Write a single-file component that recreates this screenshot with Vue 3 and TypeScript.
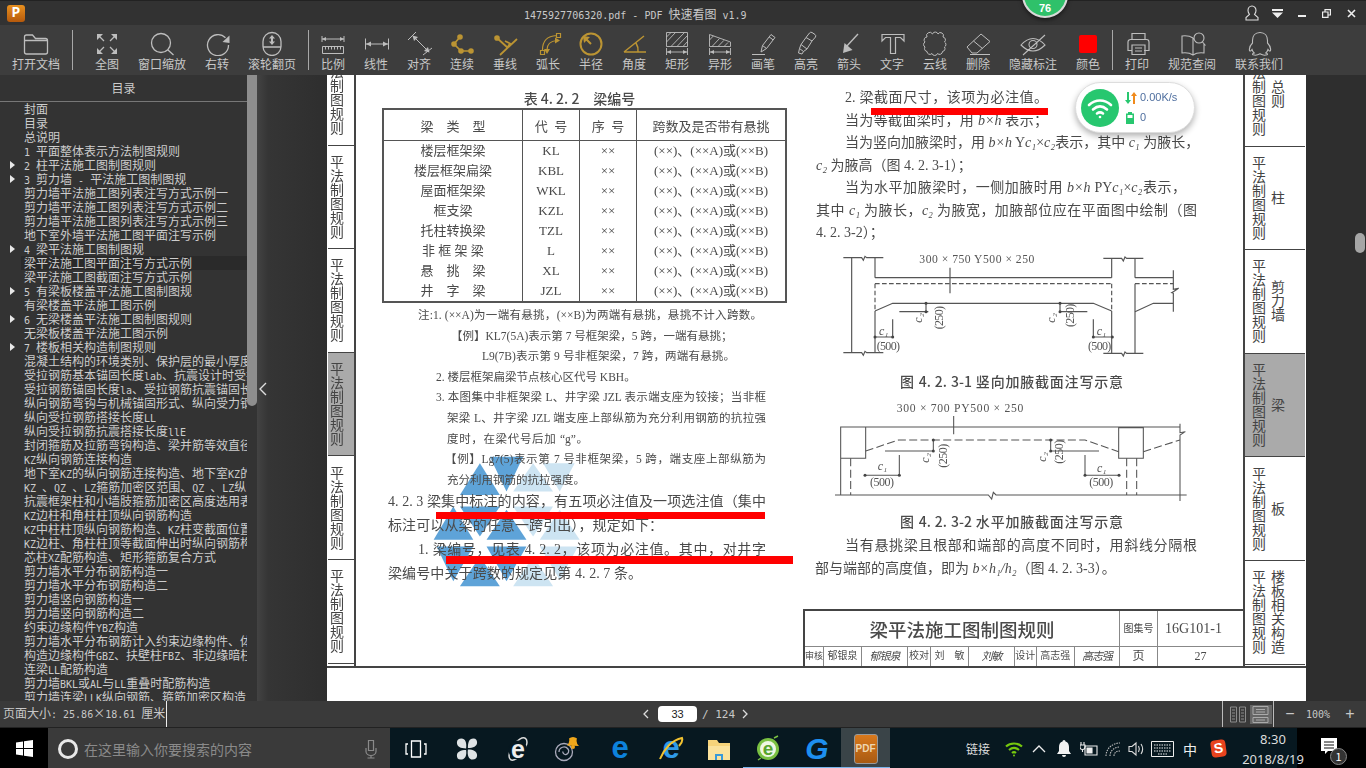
<script setup lang="ts">
interface Tool { label: string; d?: string; f?: string; sw?: number; color?: string; wide?: boolean }
interface Line { t: string; x: number; w: number }

const GOLD = '#bb9433';
const circ = (x: number, y: number, r: number) => `M${x - r} ${y}a${r} ${r} 0 1 0 ${2 * r} 0a${r} ${r} 0 1 0 ${-2 * r} 0z`;

const toolsA: Tool[] = [
  { label: '全图', d: 'M8 6l5 5M24 6l-5 5M8 22l5-5M24 22l-5-5', f: 'M6 4h6l-6 6zM26 4h-6l6 6zM6 24h6l-6-6zM26 24h-6l6-6z' },
  { label: '窗口缩放', wide: true, d: 'M24.500 13a9.500 9.500 0 1 1-19 0a9.500 9.500 0 1 1 19 0zM22 20l5.500 5' },
  { label: '右转', d: 'M24.500 7.800A10.500 10.500 0 1 0 27.500 15', f: 'M28.500 5.500v7.500l-7-1z' },
  { label: '滚轮翻页', wide: true, d: 'M16 2.500a9 9 0 0 1 9 9v5a9 9 0 0 1-9 9a9 9 0 0 1-9-9v-5a9 9 0 0 1 9-9zM7 17h18', f: 'M16 5l3 3.500h-2v3h2L16 15l-3-3.500h2v-3h-2z' },
];

const hatchRect = 'M5.500 12l9-9.500M10 16.500l13.500-14M16 16.500l10.500-11M22 16.500l4.500-5M5.500 7l4.500-4.500';
const dimBelow = 'M5.500 18v7M26.500 18v7M6 22h20';
const dimHeads = 'M6 22l4-2v4zM26 22l-4-2v4z';

const toolsB: Tool[] = [
  { label: '比例', d: 'M5 9h22M5 6v6M27 6v6M5.500 16.500h21v7h-21zM8.500 16.500v3M11.500 16.500v3M14.500 16.500v3M17.500 16.500v3M20.500 16.500v3M23.500 16.500v3', f: 'M5 9l4-2v4zM27 9l-4-2v4z', sw: 1 },
  { label: '线性', d: 'M5.500 8.500v11M28.500 8.500v11M6 14h22', f: 'M6 14l5-2.500v5zM28 14l-5-2.500v5z', sw: 1 },
  { label: '对齐', d: 'M5 10l8-8M20 25l9-7M10 6l16 16', f: 'M9.500 5.500l5.500 1.500-4 4zM26.500 22.500l-5.500-1.500 4-4z', sw: 1 },
  { label: '连续', d: 'M14 7L8 14l7 7h10', f: circ(14, 7, 2.8) + circ(8, 14, 2.8) + circ(15, 21, 2.8) + circ(25, 21, 2.8), sw: 1.7, color: GOLD },
  { label: '垂线', d: 'M8 8l11 10M28 9L11 25M16 11l5 2.500-2.500 4', f: circ(8, 8, 2.8), sw: 1.8, color: GOLD },
  { label: '弧长', d: 'M10.500 20c0-9 5-14 14-14.500M15 20c0-6 3-9 10-9.500M8.500 20.500h4v4h-4zM24.500 3.500h4v4h-4z', f: 'M15 24l-3-5h6zM28 10.500l-5-3v6z', sw: 1.2, color: GOLD },
  { label: '半径', d: 'M26.500 14a10.500 10.500 0 1 1-21 0a10.500 10.500 0 1 1 21 0zM16 14L9.500 7.500', f: 'M8 6l7 1-6 6z', sw: 2, color: GOLD },
  { label: '角度', d: 'M6 22h22M6 22L26 6M18 13q2.500 4 2 9', sw: 1.5, color: GOLD },
  { label: '矩形', d: 'M5.500 2.500h21v14h-21z' + hatchRect + dimBelow, f: dimHeads, sw: 0.9 },
  { label: '异形', d: 'M5.500 4.500L26.500 12v4.500h-21zM5.500 10l4-4.200M8 16.500l7.500-8M14 16.500l6-6.200M20 16.500l4-4' + dimBelow, f: dimHeads, sw: 0.9 },
  { label: '画笔', d: 'M5 24.500h13M14 22l1.500-6.500L24 4.500l4 3L19.500 18.500zM22 6.800l4 3M15.500 15.500l4 3', sw: 1 },
  { label: '高亮', d: 'M16 7.500l3.500-4.500a2 2 0 0 1 2.500-.5l3 2a2 2 0 0 1 .5 2.500L22 11zM16 7.500l-5 7 6 4.500 5-8M11 14.500l-1.500 4 4 3 3.500-2.500M9.500 18.500L8.500 23l3.500 1 1.500-2.500', sw: 1 },
  { label: '箭头', d: 'M25 4L13 17', f: 'M10 23l1.500-10 8 7z', sw: 1.4 },
  { label: '文字', d: 'M6 4.500h22v6.500l-3.500-3.500h-5v16h-5v-16h-5L6 11z', sw: 1.2 },
  { label: '云线', d: 'M8 7a2.900 2.900 0 0 1 5.500-3a2.900 2.900 0 0 1 5.500 0a2.900 2.900 0 0 1 5 3a2.900 2.900 0 0 1 1.500 5a2.900 2.900 0 0 1 0 5a2.900 2.900 0 0 1-2 4.500a2.900 2.900 0 0 1-5 2a2.900 2.900 0 0 1-5.500 0a2.900 2.900 0 0 1-5-2a2.900 2.900 0 0 1-2-4.500a2.900 2.900 0 0 1 0-5a2.900 2.900 0 0 1 2-5z', sw: 1 },
  { label: '删除', d: 'M5 17L19 4l9 7.500L15 23H10zM11.500 11l9 7.500M8 24.500h20', sw: 1 },
  { label: '隐藏标注', wide: true, d: 'M4 15Q16 2 28 15Q16 27 4 15zM20 14.500a4 4 0 1 1-8 0a4 4 0 1 1 8 0zM6 25L28 5', sw: 1.1 },
  { label: '颜色', f: 'M9 5h14a2 2 0 0 1 2 2v14a2 2 0 0 1-2 2H9a2 2 0 0 1-2-2V7a2 2 0 0 1 2-2z', color: '#ff0000' },
];

const toolsC: Tool[] = [
  { label: '打印', d: 'M11 10V3.500h13V10M11 20.500H7V12a2.500 2.500 0 0 1 2.500-2.500h16a2.500 2.500 0 0 1 2.500 2.500v8.500h-5M11 15h13v9.500H11zM14 18h7M14 21h7', sw: 1.2 },
  { label: '规范查阅', wide: true, d: 'M17 8c-3-2-7-2.500-11-2v17c4-.5 8 0 11 2c3-2 7-2.500 11-2V14M17 8v17M28 8a5 5 0 1 1-10 0a5 5 0 1 1 10 0zM26.500 12l3 3.500', sw: 1.1 },
  { label: '联系我们', wide: true, d: 'M17 2.500c-5 0-7.500 3.500-7.500 8v2.500c-2 2-3.500 5-3 7.500.5 1 1.500.5 2.500-1 .5 1.500 1.200 2.700 2.200 3.500-1.500.5-2.200 1.200-1.200 1.800 2 .7 5 .2 7-1 2 1.200 5 1.700 7 1 1-.6.3-1.300-1.200-1.800 1-.8 1.700-2 2.200-3.500 1 1.500 2 2 2.500 1 .5-2.500-1-5.500-3-7.500v-2.500c0-4.500-2.500-8-7.500-8z', sw: 1.1 },
];

// 目录: a leading ">" means the row has a collapse arrow
const toc: string[] = [
  '封面', '目录', '总说明', '1 平面整体表示方法制图规则', '>2 柱平法施工图制图规则', '>3 剪力墙 - 平法施工图制图规',
  '剪力墙平法施工图列表注写方式示例一', '剪力墙平法施工图列表注写方式示例二', '剪力墙平法施工图列表注写方式示例三',
  '地下室外墙平法施工图平面注写示例', '>4 梁平法施工图制图规', '梁平法施工图平面注写方式示例', '梁平法施工图截面注写方式示例',
  '>5 有梁板楼盖平法施工图制图规', '有梁楼盖平法施工图示例', '>6 无梁楼盖平法施工图制图规则', '无梁板楼盖平法施工图示例',
  '>7 楼板相关构造制图规则', '混凝土结构的环境类别、保护层的最小厚度', '受拉钢筋基本锚固长度lab、抗震设计时受拉钢筋',
  '受拉钢筋锚固长度la、受拉钢筋抗震锚固长度', '纵向钢筋弯钩与机械锚固形式、纵向受力钢筋', '纵向受拉钢筋搭接长度LL',
  '纵向受拉钢筋抗震搭接长度llE', '封闭箍筋及拉筋弯钩构造、梁并筋等效直径', 'KZ纵向钢筋连接构造', '地下室KZ的纵向钢筋连接构造、地下室KZ的',
  'KZ 、QZ 、LZ箍筋加密区范围、QZ 、LZ纵向钢筋', '抗震框架柱和小墙肢箍筋加密区高度选用表', 'KZ边柱和角柱柱顶纵向钢筋构造',
  'KZ中柱柱顶纵向钢筋构造、KZ柱变截面位置', 'KZ边柱、角柱柱顶等截面伸出时纵向钢筋构造', '芯柱XZ配筋构造、矩形箍筋复合方式',
  '剪力墙水平分布钢筋构造一', '剪力墙水平分布钢筋构造二', '剪力墙竖向钢筋构造一', '剪力墙竖向钢筋构造二', '约束边缘构件YBZ构造',
  '剪力墙水平分布钢筋计入约束边缘构件、体积', '构造边缘构件GBZ、扶壁柱FBZ、非边缘暗柱', '连梁LL配筋构造',
  '剪力墙BKL或AL与LL重叠时配筋构造', '剪力墙连梁LLK纵向钢筋、箍筋加密区构造',
];

const parts = (s: string) => s.replace(/^>/, '').split(/([\x00-\x7f]+)/).filter(Boolean);
const isLatin = (s: string) => /^[\x00-\x7f]/.test(s);
const italics = (s: string) => s.split(/(b×h₁\/h₂|b×h|c₁|c₂)/).filter(Boolean);
const isItalic = (s: string) => /^(b×|c[₁₂])/.test(s);

const tabNames = ['总则', '柱', '剪力墙', '梁', '板', '楼板相关构造'];

const beams = [
  ['楼层框架梁', 'KL'], ['楼层框架扁梁', 'KBL'], ['屋面框架梁', 'WKL'], ['框支梁', 'KZL'],
  ['托柱转换梁', 'TZL'], ['非 框 架 梁', 'L'], ['悬　挑　梁', 'XL'], ['井　字　梁', 'JZL'],
];

const notes: Line[] = [
  { t: '注:1. (××A)为一端有悬挑，(××B)为两端有悬挑，悬挑不计入跨数。', x: 62, w: 344 },
  { t: '【例】KL7(5A)表示第 7 号框架梁，5 跨，一端有悬挑；', x: 95, w: 276 },
  { t: 'L9(7B)表示第 9 号非框架梁，7 跨，两端有悬挑。', x: 126, w: 253 },
  { t: '2. 楼层框架扁梁节点核心区代号 KBH。', x: 80, w: 197 },
  { t: '3. 本图集中非框架梁 L、井字梁 JZL 表示端支座为铰接；当非框', x: 80, w: 330 },
  { t: '架梁 L、井字梁 JZL 端支座上部纵筋为充分利用钢筋的抗拉强', x: 91, w: 319 },
  { t: '度时，在梁代号后加 “g”。', x: 91, w: 141 },
  { t: '【例】Lg7(5)表示第 7 号非框架梁，5 跨，端支座上部纵筋为', x: 89, w: 321 },
  { t: '充分利用钢筋的抗拉强度。', x: 91, w: 134 },
];

const mainLines: Line[] = [
  { t: '4. 2. 3 梁集中标注的内容，有五项必注值及一项选注值（集中', x: 32, w: 378 },
  { t: '标注可以从梁的任意一跨引出），规定如下：', x: 32, w: 275 },
  { t: '1. 梁编号，见表 4. 2. 2，该项为必注值。其中，对井字', x: 62, w: 348 },
  { t: '梁编号中关于跨数的规定见第 4. 2. 7 条。', x: 32, w: 254 },
];

const rightLines: Line[] = [
  { t: '2. 梁截面尺寸，该项为必注值。', x: 42, w: 203 },
  { t: '当为等截面梁时，用 b×h 表示；', x: 42, w: 203 },
  { t: '当为竖向加腋梁时，用 b×h  Yc₁×c₂表示，其中 c₁ 为腋长，', x: 42, w: 352 },
  { t: 'c₂ 为腋高（图 4. 2. 3-1）；', x: 13, w: 150 },
  { t: '当为水平加腋梁时，一侧加腋时用 b×h  PYc₁×c₂表示，', x: 42, w: 341 },
  { t: '其中 c₁ 为腋长，c₂ 为腋宽，加腋部位应在平面图中绘制（图', x: 13, w: 381 },
  { t: '4. 2. 3-2）；', x: 13, w: 66 },
];

const endLines: Line[] = [
  { t: '当有悬挑梁且根部和端部的高度不同时，用斜线分隔根', x: 42, w: 352 },
  { t: '部与端部的高度值，即为 b×h₁/h₂（图 4. 2. 3-3）。', x: 12, w: 285 },
];

const lineBox = (l: Line) => ({ marginLeft: l.x + 'px', width: l.w + 'px' });

const fig1Dots = [[225, 288], [278, 288], [880, 288], [937, 288], [378, 187], [378, 212], [780, 187], [780, 212]];
const fig2Dots = [[195, 703], [298, 703], [855, 703], [957, 703], [400, 597], [400, 630], [752, 597], [752, 630]];

const darkTri = ['480,170 580,170 530,275', '390,285 510,285 450,190', '311,420 430,420 370,320', '390,320 510,320 450,410', '470,420 590,420 530,330', '320,440 430,440 370,545', '390,560 510,560 450,470', '470,440 590,440 530,545'];
const lightTri = ['550,275 670,275 610,190', '640,190 735,190 690,275', '550,320 670,320 610,410', '630,420 750,420 690,330', '550,560 670,560 610,470', '630,440 745,440 690,540'];
</script>

<template>
  <div class="app">
    <!-- 标题栏 -->
    <header class="titlebar">
      <div class="logo">P</div>
      <div class="title">
        <template v-for="p in parts('1475927706320.pdf - PDF 快速看图 v1.9')" :key="p">
          <span :class="{ mono: isLatin(p) }">{{ p }}</span>
        </template>
      </div>
      <div class="win-btns">
        <svg width="14" height="16" viewBox="0 0 14 16" fill="none" stroke="#ddd" stroke-width="1.100"><path d="M7 1c-2.500 0-4 2-4 4.500 0 2 1 3.200 1.500 4L1 12.500V15h12v-2.500L9.500 9.500C10 8.700 11 7.500 11 5.500 11 3 9.500 1 7 1z" /></svg>
        <svg class="btn-menu" width="11" height="9" viewBox="0 0 11 9" fill="#eee"><path d="M0 0h11v2H0zM0 3.500h11L5.500 9z" /></svg>
        <svg class="btn-min" width="8" height="8" viewBox="0 0 8 8" fill="#eee"><path d="M0 6h8v2H0z" /></svg>
        <svg class="btn-res" width="9" height="9" viewBox="0 0 9 9" fill="none" stroke="#eee" stroke-width="1.200"><path d="M.6 3h5.400v5.400H.6zM3 3V.6h5.400V6H6" /></svg>
        <svg class="btn-close" width="9" height="9" viewBox="0 0 9 9" stroke="#eee" stroke-width="1.600"><path d="M1 1l7 7M8 1L1 8" /></svg>
      </div>
    </header>

    <!-- 工具栏 -->
    <nav class="toolbar">
      <div class="tool wide first">
        <svg width="32" height="26" viewBox="0 0 32 26" fill="none" stroke="#bdbdbd" stroke-width="1.300"><path d="M4.500 22V7a2 2 0 0 1 2-2h6l3 3.500h10a2 2 0 0 1 2 2V22a2 2 0 0 1-2 2h-19a2 2 0 0 1-2-2zM4.500 10.500h23" /></svg>
        <span>打开文档</span>
      </div>
      <i class="sep"></i>
      <div class="group second">
        <div v-for="t in toolsA" :key="t.label" class="tool" :class="{ wide: t.wide }">
          <svg width="32" height="26" viewBox="0 0 32 26" :style="{ color: t.color || '#bdbdbd' }">
            <path v-if="t.d" :d="t.d" fill="none" stroke="currentColor" :stroke-width="t.sw || 1.300" />
            <path v-if="t.f" :d="t.f" fill="currentColor" />
          </svg>
          <span>{{ t.label }}</span>
        </div>
      </div>
      <i class="sep"></i>
      <div class="group">
        <div v-for="t in toolsB" :key="t.label" class="tool" :class="{ wide: t.wide }">
          <svg width="32" height="26" viewBox="0 0 32 26" :style="{ color: t.color || '#bdbdbd' }">
            <path v-if="t.d" :d="t.d" fill="none" stroke="currentColor" :stroke-width="t.sw || 1.300" />
            <path v-if="t.f" :d="t.f" fill="currentColor" />
          </svg>
          <span>{{ t.label }}</span>
        </div>
      </div>
      <i class="sep"></i>
      <div class="group">
        <div v-for="t in toolsC" :key="t.label" class="tool" :class="{ wide: t.wide }">
          <svg width="32" height="26" viewBox="0 0 32 26" :style="{ color: t.color || '#bdbdbd' }">
            <path v-if="t.d" :d="t.d" fill="none" stroke="currentColor" :stroke-width="t.sw || 1.300" />
            <path v-if="t.f" :d="t.f" fill="currentColor" />
          </svg>
          <span>{{ t.label }}</span>
        </div>
      </div>
    </nav>

    <main class="workspace">
      <!-- 目录 -->
      <aside class="sidebar">
        <div class="toc">
          <div class="toc-head">目录</div>
          <div v-for="(row, i) in toc" :key="i" class="toc-row" :class="{ sel: i === 11 }">
            <i v-if="row[0] === '>'" class="arrow"></i>
            <span v-for="(p, j) in parts(row)" :key="j" :class="{ mono: isLatin(p) }">{{ p }}</span>
          </div>
        </div>
        <div class="toc-scroll"><div class="thumb"></div></div>
      </aside>
      <div class="gutter">
        <svg class="collapse" width="10" height="14" viewBox="0 0 10 14" fill="none" stroke="#ddd" stroke-width="1.400"><path d="M8 1L2 7l6 6" /></svg>
      </div>

      <!-- PDF 页面 -->
      <section class="page">
        <svg class="watermark" width="153" height="137" viewBox="300 160 460 410">
          <polygon v-for="p in darkTri" :key="p" :points="p" fill="#5ea3d8" />
          <polygon v-for="p in lightTri" :key="p" :points="p" fill="#cde4f2" />
        </svg>

        <div class="sheet">
          <div class="tabs-left">
            <div class="tabs-inner">
              <div v-for="(n, i) in tabNames" :key="n" class="ltab" :class="{ on: i === 3 }">平法制图规则</div>
            </div>
          </div>

          <div class="col-left">
            <div class="tbl-title">表 4. 2. 2　梁编号</div>
            <table class="beam-table">
              <thead>
                <tr>
                  <th class="c1">梁　类　型</th><th class="c2">代 &nbsp;号</th><th class="c3">序 &nbsp;号</th><th class="c4">跨数及是否带有悬挑</th>
                </tr>
              </thead>
              <tbody>
                <tr v-for="b in beams" :key="b[1]">
                  <td>{{ b[0] }}</td><td>{{ b[1] }}</td><td>××</td><td>(××)、(××A)或(××B)</td>
                </tr>
              </tbody>
            </table>
            <div class="notes">
              <div v-for="l in notes" :key="l.t" class="line" :style="lineBox(l)">{{ l.t }}</div>
            </div>
            <div class="body-text">
              <div v-for="l in mainLines" :key="l.t" class="line" :style="lineBox(l)">{{ l.t }}</div>
            </div>
          </div>

          <div class="col-right">
            <div class="right-text">
              <div v-for="l in rightLines" :key="l.t" class="line" :style="lineBox(l)">
                <span v-for="(p, j) in italics(l.t)" :key="j" :class="{ it: isItalic(p) }">{{ p }}</span>
              </div>
            </div>

            <!-- 图 4.2.3-1 -->
            <svg class="fig fig1" width="440" height="122" viewBox="9 12 1320 366" fill="none" stroke="#555" stroke-width="3.500">
              <path d="M130 50h55l5 8 5-12 5 4h50M155 50v285M225 50v60M225 210v125M130 335h55l5 8 5-12 5 4h50" />
              <path d="M225 110h710M935 50v60M935 210v125M1005 52v58M1005 128v207M910 52h55l5 8 5-12 5 4h50M910 337h55l5 8 5-12 5 4h50" />
              <path stroke-dasharray="14 7" d="M225 128h710M225 128v82M935 128v82M1005 128h115" />
              <path d="M225 210l53-23h602l55 23M1005 212l55-25h60M1005 110h115M1120 88v57l16-3-16 10-5 3 5 2v55M450 80v77" />
              <path d="M298 212h87M378 187v28M780 187v28M780 212h82M278 235v53M225 288h53M880 235v53M880 288h57" />
              <circle v-for="d in fig1Dots" :key="d.join()" :cx="d[0]" :cy="d[1]" r="4.500" fill="#444" stroke="none" />
              <g fill="#555" stroke="none" class="fig-t">
                <text x="358" y="66" font-size="35" textLength="345">300 × 750  Y500 × 250</text>
                <text x="237" y="282" font-size="36" font-style="italic">c₁</text>
                <text x="230" y="327" font-size="36" textLength="70">(500)</text>
                <text x="890" y="282" font-size="36" font-style="italic">c₁</text>
                <text x="864" y="327" font-size="36" textLength="70">(500)</text>
                <text transform="translate(365 245) rotate(-90)" font-size="36" font-style="italic">c₂</text>
                <text transform="translate(428 265) rotate(-90)" font-size="36" textLength="70">(250)</text>
                <text transform="translate(765 245) rotate(-90)" font-size="36" font-style="italic">c₂</text>
                <text transform="translate(822 258) rotate(-90)" font-size="36" textLength="70">(250)</text>
              </g>
            </svg>
            <div class="caption cap1"><div class="line" :style="{ marginLeft: '97px', width: '223px' }">图 4. 2. 3-1 竖向加腋截面注写示意</div></div>

            <!-- 图 4.2.3-2 -->
            <svg class="fig fig2" width="440" height="114" viewBox="9 462 1320 342" fill="none" stroke="#555" stroke-width="3.200">
              <path d="M122 558h1018M461 525v55M122 558h75v94h-75zM956 560h74v92h-74zM1140 548v27l16-3-16 10v198M122 652v110M105 762h460l10 12 5-20 8 8h572" />
              <path stroke-dasharray="24 10" d="M197 630l98-33h560l101 35M1030 632l110-35M152 652v110M980 652v110M1010 652v110" />
              <path d="M255 630h145M750 630h147M400 597v33M752 597v33M298 642v61M195 703h103M855 642v61M855 703h102" />
              <circle v-for="d in fig2Dots" :key="d.join()" :cx="d[0]" :cy="d[1]" r="4.500" fill="#444" stroke="none" />
              <g fill="#555" stroke="none" class="fig-t">
                <text x="290" y="514" font-size="35" textLength="380">300 × 700  PY500 × 250</text>
                <text x="233" y="688" font-size="36" font-style="italic">c₁</text>
                <text x="210" y="736" font-size="36" textLength="72">(500)</text>
                <text x="891" y="694" font-size="36" font-style="italic">c₁</text>
                <text x="868" y="736" font-size="36" textLength="72">(500)</text>
                <text transform="translate(388 665) rotate(-90)" font-size="36" font-style="italic">c₂</text>
                <text transform="translate(441 680) rotate(-90)" font-size="36" textLength="72">(250)</text>
                <text transform="translate(738 662) rotate(-90)" font-size="36" font-style="italic">c₂</text>
                <text transform="translate(790 668) rotate(-90)" font-size="36" textLength="72">(250)</text>
              </g>
            </svg>
            <div class="caption cap2"><div class="line" :style="{ marginLeft: '97px', width: '223px' }">图 4. 2. 3-2 水平加腋截面注写示意</div></div>

            <div class="end-text">
              <div v-for="l in endLines" :key="l.t" class="line" :style="lineBox(l)">
                <span v-for="(p, j) in italics(l.t)" :key="j" :class="{ it: isItalic(p) }">{{ p }}</span>
              </div>
            </div>

            <!-- 图签 -->
            <div class="stamp">
              <div class="s-title">梁平法施工图制图规则</div>
              <div class="s-small">图集号</div>
              <div class="s-no">16G101-1</div>
              <div class="s-cell tiny">审核</div>
              <div class="s-cell">郁银泉</div>
              <div class="s-cell sign">郁银泉</div>
              <div class="s-cell">校对</div>
              <div class="s-cell">刘　敏</div>
              <div class="s-cell sign">刘敏</div>
              <div class="s-cell">设计</div>
              <div class="s-cell">高志强</div>
              <div class="s-cell sign">高志强</div>
              <div class="s-cell big">页</div>
              <div class="s-cell big end">27</div>
            </div>
          </div>

          <div class="tabs-right">
            <div class="tabs-inner">
              <div v-for="(n, i) in tabNames" :key="n" class="rtab" :class="{ on: i === 3 }">
                <span>平法制图规则</span>
                <span>{{ n }}</span>
              </div>
            </div>
          </div>
        </div>

        <i class="mark m1"></i>
        <i class="mark m2"></i>
        <i class="mark m3"></i>
      </section>

      <div class="right-pane"><div class="page-thumb"></div></div>
    </main>

    <!-- 状态栏 -->
    <footer class="statusbar">
      <div class="size-info">
        <span class="size-text">
          <span v-for="(p, j) in parts('页面大小: 25.86×18.61 厘米')" :key="j" :class="{ mono: isLatin(p) }">{{ p }}</span>
        </span>
      </div>
      <div class="pager">
        <svg width="12" height="14" viewBox="0 0 12 14" fill="none" stroke="#ddd" stroke-width="1.300"><path d="M8 3L4 7l4 4" /></svg>
        <div class="page-input">33</div>
        <span class="page-total">/ 124</span>
        <svg width="12" height="14" viewBox="0 0 12 14" fill="none" stroke="#ddd" stroke-width="1.300"><path d="M4 3l4 4-4 4" /></svg>
      </div>
      <div class="view-switch">
        <svg width="52" height="26" viewBox="0 0 52 26">
          <rect x="27" y="4" width="22" height="19" fill="#666" />
          <g fill="none" stroke="#8b8b8b">
            <path d="M7.500 6h6v15h-6zM16.500 6h6v15h-6z" />
            <path d="M9 9h3M9 12h3M9 15h3M9 18h3M18 9h3M18 12h3M18 15h3M18 18h3" />
          </g>
          <g fill="none" stroke="#aaa">
            <path d="M30 5.500h15v8H30zM30 16.500h15v5H30z" />
            <path d="M33 8.500h9M33 11h9M33 19h9" />
          </g>
        </svg>
      </div>
      <div class="zoom-ctl">
        <span class="zm">−</span>
        <span class="pct">100%</span>
        <span class="zm">+</span>
      </div>
    </footer>

    <!-- 任务栏 -->
    <div class="taskbar">
      <div class="start">
        <svg width="17" height="17" viewBox="0 0 17 17" fill="#fff"><path d="M0 2.500l7-1v6.500H0zM8 1.300L17 0v8H8zM0 9h7v6.500l-7-1zM8 9h9v8l-9-1.300z" /></svg>
      </div>
      <div class="search">
        <i class="cortana"></i>
        <span class="placeholder">在这里输入你要搜索的内容</span>
        <svg class="mic" width="12" height="20" viewBox="0 0 12 20" fill="none" stroke="#8a8a8a" stroke-width="1.200"><path d="M3.500 1.500h5v10h-5zM1 9v3.500a5 4 0 0 0 10 0V9M6 16.500V19M2.500 19h7" /></svg>
      </div>

      <div class="task-btn">
        <svg width="22" height="18" viewBox="0 0 22 18" fill="none" stroke="#fff" stroke-width="1.300"><path d="M6.500 1h9v16h-9zM3 4H1v10h2M19 4h2v10h-2" /></svg>
      </div>
      <div class="task-btn">
        <svg width="22" height="22" viewBox="0 0 24 24" fill="#dfe3e5"><path d="M11 11.500C5 11.500 1 9.500 1 5c0-3 2-4.500 5-4.500 4 0 6 4.500 5 11zM13 11c0-6 1-10.500 6-10.500 3 0 4 2 4 4.500 0 4-4 6-10 6zM11 13c1 6-1 10.500-6 10.500-3 0-4-2-4-4.500 0-4 4-6 10-6zM13 12.500c6 0 10 2 10 6.500 0 3-2 4.500-5 4.500-4 0-6-4.500-5-11z" /></svg>
      </div>
      <div class="task-btn">
        <svg width="26" height="30" viewBox="0 0 26 30">
          <ellipse cx="13" cy="15" rx="13" ry="6" transform="rotate(-55 13 15)" fill="none" stroke="#ddd" stroke-width="1.500" />
          <circle cx="13" cy="16" r="9.500" fill="#071820" />
          <text x="13" y="24" text-anchor="middle" font-size="25" font-weight="700" fill="#eee" class="ic-t">e</text>
        </svg>
      </div>
      <div class="task-btn swirl">
        <svg width="30" height="28" viewBox="0 0 30 28" fill="none" stroke="#aab" stroke-width="1.300">
          <circle cx="10" cy="17" r="8.500" />
          <path d="M5 17a5 5 0 0 1 9-3c1.500 2 .5 5-2 5.500-2 .3-3.500-1.500-3-3" />
          <path d="M13 10.500a7 7 0 0 0 2-7 6 6 0 0 1 8 0 7 7 0 0 0 2 7.500z" fill="#f0a71b" stroke="none" />
          <circle cx="19" cy="12" r="2" fill="#f0a71b" stroke="none" />
        </svg>
      </div>
      <div class="task-btn">
        <svg width="24" height="26" viewBox="0 0 24 26"><text x="12" y="22" text-anchor="middle" font-size="31" font-weight="700" fill="#0d82dc" class="ic-t">e</text></svg>
      </div>
      <div class="task-btn">
        <svg width="26" height="28" viewBox="0 0 26 28">
          <text x="13" y="23" text-anchor="middle" font-size="31" font-weight="700" fill="#2f9be8" class="ic-t">e</text>
          <path d="M2 24C6 14 14 5 24 3c1 3-1 6-3 8" fill="none" stroke="#f2c230" stroke-width="2" />
        </svg>
      </div>
      <div class="task-btn narrow tight">
        <svg width="24" height="24" viewBox="0 0 24 24">
          <path d="M1 3h9l2 3h11v17H1z" fill="#f6d37a" />
          <path d="M1 9h22v14H1z" fill="#fbe29c" />
          <path d="M8 23v-6h8v6h-2v-4h-4v4z" fill="#3a9ad9" />
        </svg>
      </div>
      <div class="task-btn narrow lit">
        <svg width="24" height="30" viewBox="0 0 24 30">
          <circle cx="12" cy="15" r="11" fill="#7ac142" />
          <circle cx="12" cy="15" r="8" fill="#eef7e3" />
          <text x="12" y="21" text-anchor="middle" font-size="19" font-weight="700" fill="#58a52c" class="ic-t">e</text>
          <path d="M2 26l3-2M18 4l4-2" stroke="#7ac142" stroke-width="1.500" />
        </svg>
      </div>
      <div class="task-btn narrow lit">
        <svg width="24" height="28" viewBox="0 0 24 28"><text x="12" y="24" text-anchor="middle" font-size="30" font-weight="700" font-style="italic" fill="#1d8ff0" class="ic-t">G</text></svg>
      </div>
      <div class="task-btn narrow lit active">
        <div class="pdf-icon">PDF</div>
      </div>

      <div class="tray">
        <span class="link">链接</span>
        <div class="ti">
          <svg width="18" height="16" viewBox="0 0 18 16" fill="none" stroke="#76c80e" stroke-width="2.200"><path d="M1 5.500c4.500-4 11.500-4 16 0M4 9c3-2.500 7-2.500 10 0M7 12c1.200-1 2.800-1 4 0" /><circle cx="9" cy="14.500" r="1" fill="#76c80e" stroke="none" /></svg>
        </div>
        <div class="ti">
          <svg width="14" height="8" viewBox="0 0 14 8" fill="none" stroke="#eee" stroke-width="1.300"><path d="M1 7l6-6 6 6" /></svg>
        </div>
        <div class="ti">
          <svg width="14" height="17" viewBox="0 0 14 17" fill="#f2f2f2"><path d="M7 0a1.500 1.500 0 0 1 1.500 1.500C11 2.200 12 4.500 12 7v4l2 3H0l2-3V7c0-2.500 1-4.800 3.500-5.500A1.500 1.500 0 0 1 7 0zM5 15h4a2 2 0 0 1-4 0z" /></svg>
        </div>
        <div class="ti">
          <svg width="18" height="16" viewBox="0 0 18 16" fill="none" stroke="#eee" stroke-width="1.100"><path d="M5 5h12v9H5z" /><path d="M7 7h5v5H7z" fill="#eee" /><path d="M1 1v3M4 1v3M0 4h5v2a2.500 2.500 0 0 1-5 0zM2.500 8v3" /></svg>
        </div>
        <div class="ti">
          <svg width="18" height="16" viewBox="0 0 18 16" fill="none" stroke="#bbb" stroke-width="1.100" stroke-dasharray="1.500 1"><path d="M1 15C1 8 7 2 15 2M5 15c0-5 4-9 10-9M9 15c0-3 2-5 6-5" /></svg>
        </div>
        <div class="ti spk">
          <svg width="18" height="16" viewBox="0 0 18 16" fill="none" stroke="#ddd" stroke-width="1.100"><path d="M1 5.500h3L8 2v12l-4-3.500H1zM10.500 5c1 1.800 1 4.200 0 6M13 3c2 3 2 7 0 10" /></svg>
        </div>
        <div class="ti kbd">
          <svg width="23" height="16" viewBox="0 0 23 16" fill="none" stroke="#eee" stroke-width="1"><path d="M.5.500h22v15H.500z" /><path d="M3 4h17M3 7h17M3 10h17M7 13h9" stroke-dasharray="1.500 1" /></svg>
        </div>
        <div class="ti kbd ime">中</div>
        <div class="ti kbd">
          <div class="sogou">S</div>
        </div>
      </div>

      <div class="clock"><span>8:30</span><span>2018/8/19</span></div>
      <div class="notify">
        <svg width="16" height="16" viewBox="0 0 16 16"><path d="M0 0h16v13H7l-3 3v-3H0z" fill="#fff" /><path d="M3 4h10M3 7h10M3 10h10" stroke="#111" /></svg>
        <span class="badge">1</span>
      </div>
    </div>

    <!-- 浮动小组件 -->
    <div class="score">76</div>
    <div class="net-widget">
      <div class="net-circle">
        <svg width="26" height="22" viewBox="0 0 26 22" fill="none" stroke="#fff" stroke-width="2.600" stroke-linecap="round">
          <path d="M2 8c6.500-6 15.500-6 22 0M6 12.500c4.500-4 9.500-4 14 0M10 16.500c2-1.500 4-1.500 6 0" />
          <circle cx="13" cy="20" r="1.300" fill="#fff" stroke="none" />
        </svg>
      </div>
      <div class="net-info">
        <div class="net-row">
          <svg width="12" height="12" viewBox="0 0 12 12"><path d="M2 0h2v8h2l-3 4-3-4h2z" fill="#27c76f" /><path d="M8 12h2V4h2L9 0 6 4h2z" fill="#f08a1c" /></svg>
          <span>0.00K/s</span>
        </div>
        <div class="net-row">
          <svg width="12" height="12" viewBox="0 0 12 12" fill="#27c76f"><path d="M3 0h4v1.500h2V12H1V1.500h2z" /><path d="M2.500 3h5v3h-5z" fill="#fff" /></svg>
          <span>0</span>
        </div>
      </div>
    </div>
  </div>
</template>

<style>
html, body { margin: 0; padding: 0; background: #333; }
</style>

<style scoped>
.app {
  position: relative;
  width: 1366px;
  height: 768px;
  overflow: hidden;
  display: flex;
  flex-direction: column;
  background: #333;
  color: #ccc;
  font-family: "Noto Sans CJK SC", "Noto Sans", sans-serif;
  font-size: 12px;
}
.mono {
  font-family: "DejaVu Sans Mono", monospace;
  font-size: 10px;
  white-space: pre;
}

/* 标题栏 */
.titlebar {
  height: 25px;
  flex: none;
  background: #323232;
  border-top: 1px solid #222;
  box-sizing: border-box;
  display: flex;
  align-items: center;
  position: relative;
}
.logo {
  width: 18px;
  height: 17px;
  margin-left: 7px;
  border-radius: 3px;
  background: linear-gradient(180deg, #e8901f, #b5590c);
  color: #fff;
  font: 700 14px/17px "Liberation Mono", monospace;
  text-align: center;
}
.title {
  position: absolute;
  left: 524px;
  top: 4px;
  line-height: 17px;
  color: #c9c9c9;
  white-space: nowrap;
}
.win-btns {
  margin-left: auto;
  display: flex;
  align-items: center;
  padding-right: 10px;
}
.btn-menu { margin-left: 13px; }
.btn-min { margin-left: 15px; }
.btn-res { margin-left: 16px; }
.btn-close { margin-left: 16px; }

/* 工具栏 */
.toolbar {
  height: 50px;
  flex: none;
  background: #3d3d3d;
  display: flex;
  align-items: flex-start;
  padding-top: 5px;
  box-sizing: border-box;
}
.group {
  display: flex;
  gap: 19px;
  margin: 0 12px;
}
.group.second { margin-left: 22px; }
.sep {
  width: 1px;
  height: 40px;
  background: #a8a8a8;
  flex: none;
}
.tool {
  width: 24px;
  display: flex;
  flex-direction: column;
  align-items: center;
  flex: none;
}
.tool.wide { width: 48px; }
.tool.first { margin: 0 12px; }
.tool svg { display: block; flex: none; }
.tool span {
  line-height: 16px;
  white-space: nowrap;
  color: #c8c8c8;
}

/* 主区域 */
.workspace {
  height: 626px;
  flex: none;
  display: flex;
}
.sidebar {
  width: 257px;
  flex: none;
  display: flex;
  background: #333;
}
.toc {
  width: 247px;
  height: 626px;
  overflow: hidden;
}
.toc-head {
  height: 26px;
  text-align: center;
  border-bottom: 1px solid #777;
  line-height: 25px;
}
.toc-row {
  position: relative;
  height: 14px;
  line-height: 14px;
  padding-left: 24px;
  white-space: nowrap;
  color: #cdcdcd;
}
.toc-row.sel {
  background: #2a2a2a;
  margin-left: 21px;
  padding-left: 3px;
}
.arrow {
  position: absolute;
  left: 10px;
  top: 3px;
  border-left: 5px solid #e8e8e8;
  border-top: 4px solid transparent;
  border-bottom: 4px solid transparent;
}
.toc-scroll {
  width: 10px;
  flex: none;
}
.thumb {
  height: 331px;
  background: #8e8e8e;
  border-radius: 0 0 5px 5px;
}
.gutter {
  width: 70px;
  flex: none;
  background: linear-gradient(90deg, #434343, #353535 16%, #2e2e2e);
  position: relative;
}
.collapse {
  position: absolute;
  left: 1px;
  top: 307px;
}

/* PDF 页 */
.page {
  position: relative;
  width: 979px;
  flex: none;
  background: #fff;
  overflow: hidden;
}
.watermark {
  position: absolute;
  left: 103px;
  top: 378px;
}
.sheet {
  position: relative;
  height: 591px;
  display: flex;
  border-bottom: 2px solid #444;
  font-family: "Liberation Serif", "Noto Sans CJK SC", serif;
  color: #4a4a4a;
  filter: blur(0.25px);
}
.tabs-left {
  width: 29px;
  flex: none;
  padding-left: 1px;
  box-sizing: border-box;
  border-right: 2px solid #444;
  overflow: hidden;
}
.tabs-inner { margin-top: -33px; }
.ltab {
  width: 100%;
  height: 103.600px;
  box-sizing: border-box;
  border-bottom: 1px solid #444;
  writing-mode: vertical-lr;
  text-align: center;
  font: 14px/17px "Noto Sans CJK SC", sans-serif;
  color: #444;
  background: #fff;
}
.ltab.on, .rtab.on { background: #aaa; }
.col-left {
  width: 447px;
  flex: none;
}
.tbl-title {
  margin-top: 13px;
  height: 20px;
  text-align: center;
  font: 500 14px/20px "Noto Sans CJK SC", sans-serif;
}
.beam-table {
  margin-left: 26px;
  width: 405px;
  border-collapse: collapse;
  table-layout: fixed;
  border: 2px solid #555;
  font-size: 13px;
  text-align: center;
}
.beam-table th {
  height: 30px;
  padding: 0;
  font-weight: 400;
  border-bottom: 1px solid #555;
  font-size: 13px;
}
.beam-table td {
  height: 20px;
  padding: 0;
  line-height: 20px;
  white-space: nowrap;
}
.beam-table th, .beam-table td { border-left: 1px solid #555; }
.beam-table th:first-child, .beam-table td:first-child { border-left: 0; }
.c1 { width: 138px; }
.c2, .c3 { width: 56px; }
.line {
  white-space: nowrap;
  text-align: justify;
  text-align-last: justify;
}
.notes {
  margin-top: 2px;
  font-size: 11.500px;
  line-height: 20.600px;
}
.body-text {
  font-size: 14px;
  line-height: 24px;
}
.col-right {
  width: 440px;
  flex: none;
  display: flex;
  flex-direction: column;
}
.right-text {
  padding-top: 12px;
  font-size: 14px;
  line-height: 22.500px;
}
.it { font-style: italic; }
.fig {
  display: block;
  flex: none;
}
.fig-t { font-family: "Liberation Serif", serif; white-space: pre; }
.ic-t { font-family: "Liberation Sans", sans-serif; }
.caption {
  font: 500 14px/28px "Noto Sans CJK SC", sans-serif;
}
.cap2 { line-height: 25px; }
.end-text {
  font-size: 14px;
  line-height: 23px;
}
.stamp {
  margin-top: auto;
  height: 57px;
  box-sizing: border-box;
  border-top: 2px solid #444;
  border-left: 2px solid #444;
  display: grid;
  grid-template-columns: 19px 38px 46px 23px 38px 46px 21.500px 38.500px 45px 38px 1fr;
  grid-template-rows: 36px 19px;
  font-size: 10px;
  text-align: center;
}
.s-title {
  grid-column: 1 / span 9;
  font: 500 18.500px/36px "Noto Sans CJK SC", sans-serif;
  border-right: 1px solid #888;
  border-bottom: 1px solid #888;
}
.s-small {
  line-height: 36px;
  border-right: 1px solid #888;
  border-bottom: 1px solid #888;
}
.s-no {
  font-size: 14px;
  line-height: 36px;
  padding-right: 14px;
  border-bottom: 1px solid #888;
}
.s-cell {
  line-height: 18px;
  border-right: 1px solid #888;
  white-space: nowrap;
  overflow: hidden;
}
.s-cell.tiny { font-size: 9px; }
.s-cell.sign { font-style: italic; font-size: 11px; letter-spacing: -1px; }
.s-cell.big { font-size: 12px; }
.s-cell.end { border-right: 0; }
.tabs-right {
  width: 62px;
  flex: none;
  border-left: 2px solid #444;
  box-sizing: border-box;
  overflow: hidden;
}
.tabs-right .tabs-inner { margin-top: -32px; }
.rtab {
  height: 103.600px;
  box-sizing: border-box;
  border-bottom: 1px solid #444;
  display: flex;
  align-items: center;
  gap: 5px;
  padding-left: 7px;
  background: #fff;
  color: #444;
  font: 14px/14px "Noto Sans CJK SC", sans-serif;
}
.rtab span {
  writing-mode: vertical-rl;
  width: 14px;
}
.mark {
  position: absolute;
  background: #ff0000;
  height: 7px;
}
.m1 { left: 544px; top: 33px; width: 177px; }
.m2 { left: 109px; top: 437px; width: 329px; }
.m3 { left: 119px; top: 481px; width: 347px; height: 8px; }

.right-pane {
  flex: 1;
  position: relative;
  background: #2e2e2e;
}
.page-thumb {
  position: absolute;
  right: 1px;
  top: 158px;
  width: 10px;
  height: 20px;
  border-radius: 5px;
  background: #a6a6a6;
}

/* 状态栏 */
.statusbar {
  height: 26px;
  flex: none;
  background: #3a3a3a;
  border-bottom: 1px solid #222;
  display: flex;
  align-items: center;
}
.size-info {
  width: 640px;
  flex: none;
  padding-left: 3px;
  box-sizing: border-box;
}
.size-text {
  display: inline-block;
  height: 26px;
  line-height: 24px;
  padding-right: 1px;
  border-right: 1px solid #eee;
  color: #c8c8c8;
}
.pager {
  display: flex;
  align-items: center;
  color: #c8c8c8;
}
.page-input {
  width: 39px;
  height: 16px;
  margin: 0 5px 0 6px;
  background: #fff;
  border-radius: 4px;
  color: #222;
  text-align: center;
  font: 11px/16px "Liberation Sans", sans-serif;
}
.page-total {
  font: 11px "DejaVu Sans Mono", monospace;
  width: 37px;
}
.view-switch {
  margin-left: auto;
  width: 52px;
  height: 26px;
  border-left: 1px solid #bbb;
  border-right: 1px solid #bbb;
  box-sizing: border-box;
}
.view-switch svg { display: block; }
.zoom-ctl {
  width: 92px;
  flex: none;
  display: flex;
  align-items: center;
  color: #c8c8c8;
}
.zm {
  width: 16px;
  margin: 0 8px;
  text-align: center;
  font: 16px "Liberation Sans", sans-serif;
}
.pct {
  font: 10px "DejaVu Sans Mono", monospace;
  width: 24px;
  margin-right: 4px;
}

/* 任务栏 */
.taskbar {
  height: 41px;
  flex: none;
  display: flex;
  align-items: stretch;
  background: linear-gradient(90deg, #071820 0, #071820 1297px, #000 1297px);
}
.start {
  width: 48px;
  flex: none;
  background: #000;
  display: flex;
  align-items: center;
  justify-content: center;
}
.search {
  width: 342px;
  flex: none;
  background: #3a3a3a;
  display: flex;
  align-items: center;
  position: relative;
  font-size: 14px;
}
.cortana {
  width: 14px;
  height: 14px;
  border: 3px solid #e8e8e8;
  border-radius: 50%;
  margin-left: 10px;
}
.placeholder {
  margin-left: 6px;
  color: #8a8a8a;
  white-space: nowrap;
}
.mic { margin-left: 113px; }
.task-btn {
  width: 51px;
  flex: none;
  display: flex;
  align-items: center;
  justify-content: center;
  box-sizing: border-box;
}
.task-btn.narrow { width: 49px; }
.task-btn.tight { margin-left: -2px; }
.task-btn.lit { box-shadow: inset 0 -2px 0 #7ab4ea; }
.task-btn.active { background: #3a4448; }
.pdf-icon {
  width: 24px;
  height: 30px;
  border-radius: 3px;
  background: linear-gradient(180deg, #d9791c, #a85a12);
  border: 1px solid #999;
  box-sizing: border-box;
  color: #eed6b0;
  font: 700 10px/28px "Liberation Sans", sans-serif;
  text-align: center;
}
.tray {
  margin-left: 76px;
  display: flex;
  align-items: center;
  color: #ddd;
}
.link {
  width: 24px;
  white-space: nowrap;
  margin-right: 11px;
}
.ti {
  width: 25px;
  flex: none;
  display: flex;
  align-items: center;
  justify-content: center;
}
.ti.spk { width: 22px; }
.ti.kbd { width: 28px; }
.ime { font-size: 14px; color: #eee; }
.sogou {
  width: 15px;
  height: 17px;
  border-radius: 4px;
  background: #e8431e;
  color: #fff;
  font: 700 14px/17px "Liberation Sans", sans-serif;
  text-align: center;
  transform: rotate(-8deg);
}
.clock {
  margin-left: 10px;
  width: 62px;
  flex: none;
  display: flex;
  flex-direction: column;
  align-items: center;
  justify-content: center;
  color: #ddd;
  font: 13px/20px "Noto Sans", sans-serif;
  white-space: nowrap;
}
.notify {
  position: relative;
  margin-left: 17px;
  width: 30px;
  display: flex;
  align-items: center;
}
.notify svg { margin-top: -6px; }
.badge {
  position: absolute;
  left: 9px;
  top: 20px;
  width: 15px;
  height: 15px;
  line-height: 15px;
  border-radius: 50%;
  background: #333;
  border: 1px solid #888;
  color: #fff;
  font-size: 11px;
  text-align: center;
}

/* 浮动 */
.score {
  position: absolute;
  left: 1022px;
  top: -28px;
  width: 46px;
  height: 46px;
  box-sizing: border-box;
  border: 2px solid #d9d9d9;
  border-radius: 50%;
  background: #2fc16a;
  color: #fff;
  font: 700 11px/11px "Liberation Sans", sans-serif;
  text-align: center;
  padding-top: 29px;
  box-shadow: 0 2px 4px rgba(0, 0, 0, .5);
}
.net-widget {
  position: absolute;
  left: 1075px;
  top: 82px;
  width: 120px;
  height: 51px;
  box-sizing: border-box;
  border: 1px solid #ddd;
  border-radius: 26px;
  background: #fff;
  box-shadow: 0 3px 6px rgba(0, 0, 0, .3);
  display: flex;
  align-items: center;
  padding-left: 5px;
  font-family: "Liberation Sans", sans-serif;
}
.net-circle {
  width: 38px;
  height: 38px;
  border-radius: 50%;
  background: #27c76f;
  display: flex;
  align-items: center;
  justify-content: center;
  flex: none;
}
.net-info {
  margin-left: 6px;
  display: flex;
  flex-direction: column;
  gap: 7px;
}
.net-row {
  display: flex;
  align-items: center;
  gap: 3px;
  color: #4f6f9f;
  font-size: 11px;
  line-height: 13px;
}
</style>
